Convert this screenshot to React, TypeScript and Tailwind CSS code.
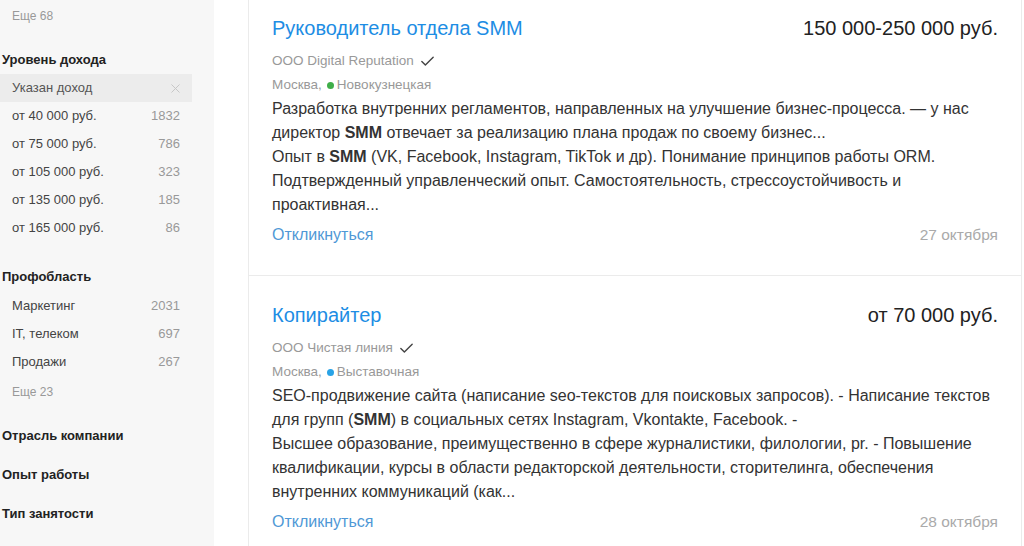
import { Check, X } from "lucide-react";

const incomes: [string, number][] = [
  ["от 40 000 руб.", 1832],
  ["от 75 000 руб.", 786],
  ["от 105 000 руб.", 323],
  ["от 135 000 руб.", 185],
  ["от 165 000 руб.", 86],
];

const areas: [string, number][] = [
  ["Маркетинг", 2031],
  ["IT, телеком", 697],
  ["Продажи", 267],
];

function Row({ label, count }: { label: string; count: number }) {
  return (
    <div className="flex h-[28px] w-[192px] items-center justify-between pl-[12px] pr-[12px] text-[13px]">
      <span className="text-[#444]">{label}</span>
      <span className="text-[#999]">{count}</span>
    </div>
  );
}

function Sidebar() {
  return (
    <aside className="w-[214px] shrink-0 bg-[#f7f7f7] pt-[6px]">
      <div className="h-[20px] pl-[12px] text-[12px] leading-[20px] text-[#999]">Еще 68</div>

      <div className="mt-[24px] h-[20px] pl-[2px] text-[13px] font-bold leading-[20px] text-[#222]">Уровень дохода</div>
      <div className="mt-[4px] flex h-[28px] w-[192px] items-center justify-between bg-[#ececec] pl-[12px] pr-[9px] text-[13px]">
        <span className="text-[#555]">Указан доход</span>
        <X className="h-[15px] w-[15px] text-[#c4c4c4]" strokeWidth={1.5} />
      </div>
      {incomes.map(([l, c]) => (
        <Row key={l} label={l} count={c} />
      ))}

      <div className="mt-[25px] h-[20px] pl-[2px] text-[13px] font-bold leading-[20px] text-[#222]">Профобласть</div>
      <div className="mt-[5px]">
        {areas.map(([l, c]) => (
          <Row key={l} label={l} count={c} />
        ))}
      </div>
      <div className="mt-[6px] h-[20px] pl-[12px] text-[12px] leading-[20px] text-[#999]">Еще 23</div>

      <div className="mt-[24px] h-[20px] pl-[2px] text-[13px] font-bold leading-[20px] text-[#222]">Отрасль компании</div>
      <div className="mt-[19px] h-[20px] pl-[2px] text-[13px] font-bold leading-[20px] text-[#222]">Опыт работы</div>
      <div className="mt-[19px] h-[20px] pl-[2px] text-[13px] font-bold leading-[20px] text-[#222]">Тип занятости</div>
    </aside>
  );
}

type Vacancy = {
  title: string;
  salary: string;
  company: string;
  metro: string;
  dot: string;
  resp: React.ReactNode;
  req: React.ReactNode;
  date: string;
};

const vacancies: Vacancy[] = [
  {
    title: "Руководитель отдела SMM",
    salary: "150 000-250 000 руб.",
    company: "ООО Digital Reputation",
    metro: "Новокузнецкая",
    dot: "bg-[#3fae49]",
    resp: (
      <>
        Разработка внутренних регламентов, направленных на улучшение бизнес-процесса. — у нас директор <b>SMM</b> отвечает за реализацию плана продаж по своему бизнес...
      </>
    ),
    req: (
      <>
        Опыт в <b>SMM</b> (VK, Facebook, Instagram, TikTok и др). Понимание принципов работы ORM. Подтвержденный управленческий опыт. Самостоятельность, стрессоустойчивость и проактивная...
      </>
    ),
    date: "27 октября",
  },
  {
    title: "Копирайтер",
    salary: "от 70 000 руб.",
    company: "ООО Чистая линия",
    metro: "Выставочная",
    dot: "bg-[#29a3e6]",
    resp: (
      <>
        SEO-продвижение сайта (написание seo-текстов для поисковых запросов). - Написание текстов для групп (<b>SMM</b>) в социальных сетях Instagram, Vkontakte, Facebook. -
      </>
    ),
    req: (
      <>
        Высшее образование, преимущественно в сфере журналистики, филологии, pr. - Повышение квалификации, курсы в области редакторской деятельности, сторителинга, обеспечения внутренних коммуникаций (как...
      </>
    ),
    date: "28 октября",
  },
];

function VacancyCard({ v }: { v: Vacancy }) {
  return (
    <div className="border-b border-[#ebebeb] px-[23px] pb-[28px] pt-[27px]">
      <div className="flex items-start justify-between">
        <a className="text-[20px] leading-[24px] text-[#1d8de4]">{v.title}</a>
        <span className="text-[20px] leading-[24px] text-[#222]">{v.salary}</span>
      </div>
      <div className="mt-[9px] flex h-[24px] items-center gap-[5px] text-[13.5px] text-[#999]">
        {v.company}
        <Check className="h-[17px] w-[17px] text-[#444]" strokeWidth={2} />
      </div>
      <div className="flex h-[24px] items-center text-[13.5px] text-[#999]">
        Москва,
        <span className={`ml-[5px] mr-[3px] h-[7px] w-[7px] rounded-full ${v.dot}`} />
        {v.metro}
      </div>
      <div className="text-[16px] leading-[24px] text-[#333]">
        <div>{v.resp}</div>
        <div>{v.req}</div>
      </div>
      <div className="mt-[6px] flex h-[24px] items-center justify-between">
        <a className="text-[16px] text-[#4f98d6]">Откликнуться</a>
        <span className="text-[15.5px] text-[#aaa]">{v.date}</span>
      </div>
    </div>
  );
}

export default function App() {
  return (
    <div className="flex h-[546px] w-[1024px] overflow-hidden bg-white font-['Liberation_Sans',Arial,sans-serif]">
      <Sidebar />
      <main className="ml-[34px] -mt-[11px] w-[774px] shrink-0 self-start border-x border-[#ebebeb]">
        {vacancies.map((v) => (
          <VacancyCard key={v.title} v={v} />
        ))}
      </main>
    </div>
  );
}
